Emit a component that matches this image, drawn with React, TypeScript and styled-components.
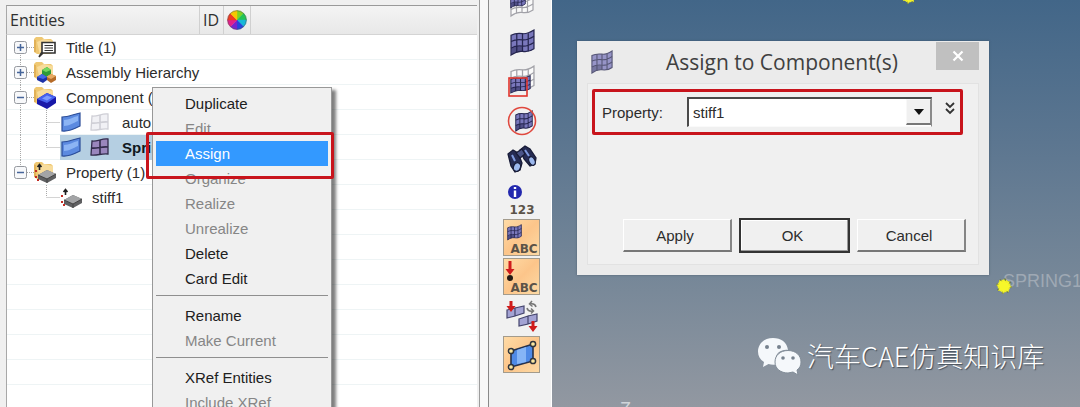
import React from "react";
import styled, { createGlobalStyle, css } from "styled-components";

const uiFont = '"Liberation Sans", Arial, sans-serif';
const titleFont = '"Open Sans", "Noto Sans", sans-serif';
const red = "#c8141c";

const GlobalStyle = createGlobalStyle`
  * { box-sizing: border-box; }
  body { margin: 0; background: #f0f0f0; font-family: ${uiFont}; font-size: 15px; color: #2c2c2c; }
  button, select { font: inherit; color: inherit; }
  svg { display: block; flex: none; }
`;

const Page = styled.div`
  position: relative;
  display: flex;
  height: 100vh;
  overflow: hidden;
`;

/* ---------- entity browser ---------- */

const Browser = styled.section`
  flex: 0 0 477px;
  display: flex;
  flex-direction: column;
  padding: 5px 0 0 6px;
`;

const HeaderBar = styled.div`
  flex: none;
  display: flex;
  align-items: stretch;
  height: 30px;
  border-top: 1px solid #9a9a9a;
  border-left: 1px solid #a8a8a8;
  border-bottom: 1px solid #d4d4d4;
  background: linear-gradient(#f4f4f4, #e8e8e8);
  font-family: ${titleFont};
  font-size: 16px;
  color: #303030;
`;

const HeaderCell = styled.div<{ $width: number }>`
  flex: 0 0 ${(p) => p.$width}px;
  display: flex;
  align-items: center;
  padding-left: 3px;
  border-right: 1px solid #d0d0d0;
`;

const Tree = styled.ul`
  flex: 1;
  margin: 0;
  padding: 0;
  list-style: none;
  border-left: 1px solid #a8a8a8;
  background: repeating-linear-gradient(#fff 0 24px, #eef4f5 24px 25px);
`;

const TreeRow = styled.li`
  display: flex;
  align-items: center;
  height: 25px;
`;

const Gutter = styled.div<{ $deep?: boolean }>`
  flex: 0 0 ${(p) => (p.$deep ? 53 : 27)}px;
  height: 25px;
`;

const Label = styled.span<{ $gap?: number }>`
  margin-left: ${(p) => p.$gap ?? 8}px;
  white-space: nowrap;
`;

const Selection = styled.div<{ $on?: boolean }>`
  display: flex;
  align-items: center;
  gap: 8px;
  height: 25px;
  padding-left: 1px;
  width: 130px;
  ${(p) =>
    p.$on &&
    css`
      background: #b5cfe2;
      font-weight: bold;
      color: #101820;
    `}
`;

const Splitter = styled.div`
  flex: 0 0 13px;
  border-left: 2px solid #f0f0f0;
  background: linear-gradient(90deg, #9c9c9c 0 1px, #f8f8f8 1px 9px, #8a8a8a 9px 10px, #f0f0f0 10px);
`;

/* ---------- tool strip ---------- */

const ToolStrip = styled.nav`
  flex: 0 0 62px;
  display: flex;
  flex-direction: column;
  gap: 2px;
  padding-left: 13px;
  border-right: 1px solid #fff;
  background: #f1f1f1;
  overflow: hidden;
  & > :first-child { margin-top: -15px; }
`;

const Tool = styled.button<{ $active?: boolean }>`
  flex: none;
  width: 37px;
  height: 37px;
  padding: 0;
  border: 1px solid ${(p) => (p.$active ? "#a39b8c" : "transparent")};
  background: ${(p) => (p.$active ? "linear-gradient(135deg, #ffdba6, #fcc58a 50%, #fdd9a4)" : "none")};
`;

/* ---------- context menu ---------- */

const Menu = styled.div`
  position: absolute;
  left: 152px;
  top: 87px;
  width: 180px;
  display: flex;
  flex-direction: column;
  padding: 3px;
  border: 1px solid #989898;
  background: #f0f0f0;
  box-shadow: 4px 3px 3px rgba(0, 0, 0, 0.5);
`;

const MenuItem = styled.button<{ $hot?: boolean }>`
  height: 25px;
  flex: none;
  padding: 0 0 0 29px;
  border: 0;
  text-align: left;
  background: ${(p) => (p.$hot ? "#3399ff" : "none")};
  color: ${(p) => (p.$hot ? "#fff" : "#202020")};
  &:disabled { color: #868686; }
`;

const MenuRule = styled.hr`
  flex: none;
  width: 100%;
  height: 1px;
  margin: 4px 0 7px;
  border: 0;
  background: #8f8f8f;
`;

const MenuMarker = styled.div`
  position: absolute;
  left: 146px;
  top: 132px;
  width: 188px;
  height: 47px;
  border: 3px solid ${red};
  border-radius: 2px;
  pointer-events: none;
`;

/* ---------- model viewport and dialog ---------- */

const Viewport = styled.main`
  position: relative;
  flex: 1;
  overflow: hidden;
  background: linear-gradient(#426688, #5c7690 35%, #768798 68%, #9298a1);
`;

const Pin = styled.div<{ $x: number; $y: number }>`
  position: absolute;
  left: ${(p) => p.$x}px;
  top: ${(p) => p.$y}px;
`;

const NodeLabel = styled.span<{ $bright?: boolean }>`
  font-size: 18px;
  line-height: 20px;
  color: ${(p) => (p.$bright ? "#d0d4d9" : "#9fa9b4")};
`;

const Watermark = styled.div`
  position: absolute;
  left: 206px;
  top: 336px;
  display: flex;
  align-items: center;
  gap: 5px;
  font-family: "Noto Sans CJK SC", sans-serif;
  font-size: 27px;
  line-height: 40px;
  font-weight: 300;
  color: #fff;
  text-shadow: 1px 1px 1px rgba(40, 50, 60, 0.7);
  white-space: nowrap;
`;

const Dialog = styled.section`
  position: absolute;
  left: 25px;
  top: 41px;
  width: 412px;
  padding: 0 10px 10px;
  background: #ebebeb;
  box-shadow: 0 0 2px rgba(40, 55, 75, 0.5);
`;

const TitleBar = styled.header`
  display: flex;
  align-items: flex-start;
  height: 42px;
  padding: 1px 0 0 4px;
`;

const TitleIcon = styled.div`
  padding-top: 8px;
`;

const DialogTitle = styled.h1`
  flex: 1;
  margin: 0;
  padding-left: 15px;
  font-family: ${titleFont};
  font-size: 21px;
  line-height: 40px;
  font-weight: 400;
  text-align: center;
  color: #404040;
`;

const CloseButton = styled.button`
  display: flex;
  align-items: center;
  justify-content: center;
  width: 43px;
  height: 28px;
  padding: 0;
  border: 0;
  background: #c0c0c0;
`;

const DialogBody = styled.div`
  display: flex;
  flex-direction: column;
  justify-content: space-between;
  height: 182px;
  padding: 5px 12px 11px 4px;
  border: 1px solid #e2e2e2;
  background: #f0f0f0;
`;

const PropertyRow = styled.div`
  display: flex;
  align-items: center;
  gap: 12px;
  height: 46px;
  width: 371px;
  padding: 0 4px 0 7px;
  border: 3px solid ${red};
  border-radius: 2px;
`;

const PropertyLabel = styled.label`
  flex: 0 0 73px;
`;

const Combo = styled.div`
  position: relative;
  flex: 1;
  height: 30px;
`;

const ComboSelect = styled.select`
  appearance: none;
  width: 100%;
  height: 100%;
  padding: 0 28px 0 4px;
  border: solid;
  border-width: 2px 1px 1px 2px;
  border-color: #4a4a4a #8a8a8a #fafafa #4a4a4a;
  border-radius: 0;
  background: #fff;
`;

const ComboArrow = styled.span`
  position: absolute;
  right: 1px;
  top: 2px;
  display: flex;
  align-items: center;
  justify-content: center;
  width: 25px;
  height: 26px;
  border: solid;
  border-width: 1px 1px 2px 1px;
  border-color: #f8f8f8 #8a8a8a #777 #f8f8f8;
  background: #f0f0f0;
  pointer-events: none;
`;

const MoreButton = styled.button`
  flex: none;
  width: 12px;
  height: 24px;
  margin: 0 0 8px;
  padding: 0;
  border: 0;
  background: none;
`;

const Actions = styled.div`
  display: flex;
  align-items: center;
  justify-content: flex-end;
  gap: 7px;
`;

const ActionButton = styled.button<{ $primary?: boolean }>`
  width: ${(p) => (p.$primary ? 111 : 109)}px;
  height: ${(p) => (p.$primary ? 35 : 33)}px;
  padding: 0 4px 0 0;
  border: solid;
  ${(p) =>
    p.$primary
      ? css`
          border-width: 2px;
          border-color: #333;
          box-shadow: inset -1px -1px #999, inset 1px 1px #fff;
        `
      : css`
          border-width: 1px 2px 2px 1px;
          border-color: #fff #858585 #777 #fff;
        `}
  background: #f0f0f0;
`;

/* ---------- drawings ---------- */

const dots = { stroke: "#a8a8a8", strokeDasharray: "1 1", fill: "none" };

function Expander({ open, first, last }: { open?: boolean; first?: boolean; last?: boolean }) {
  return (
    <Gutter>
      <svg width="27" height="25">
        <path d={`M13.5 ${first ? 12 : 0}V${last ? 12 : 25}M20 12.5H27`} {...dots} />
        <rect x="7.500" y="6.500" width="12" height="12" rx="2" fill="#f7f8fa" stroke="#96999f" />
        <path d={open ? "M10 12.500H17" : "M10 12.500H17M13.500 9V16"} stroke="#46659a" strokeWidth="1.500" />
      </svg>
    </Gutter>
  );
}

function Branch({ trunk, last }: { trunk?: boolean; last?: boolean }) {
  return (
    <Gutter $deep>
      <svg width="53" height="25">
        <path d={`${trunk ? "M13.5 0V25" : ""}M39.5 0V${last ? 12 : 25}M39.5 12.5H53`} {...dots} />
      </svg>
    </Gutter>
  );
}

function FolderIcon({ kind }: { kind: "title" | "assembly" | "component" | "property" }) {
  return (
    <svg width="24" height="25" viewBox="0 0 24 25">
      <path d="M0 4L2 2H8L10 4H17L19 6V17L17 19H3L0 17Z" fill="#efc873" />
      <path d="M3 7L10 4L19 6V16L6 20Z" fill="#f8dc9c" />
      <path d="M1 5V17" stroke="#d39a3c" />
      {kind === "title" && (
        <g stroke="#333" strokeWidth="1.600" fill="#fff">
          <path d="M8 7.500H21V18H9L5 22L8 17Z" />
          <path d="M10.500 10.500H19M10.500 13H19M10.500 15.500H19" strokeWidth="1.200" />
        </g>
      )}
      {kind === "assembly" && (
        <g>
          <path d="M8 10L13 7L17 10V14L12 17L8 14Z" fill="#2f9a38" />
          <path d="M8 10L13 7L17 10L12 12Z" fill="#74d65e" />
          <path d="M3 17L8 14L13 17V20L9 23L3 20Z" fill="#1d32a8" />
          <path d="M3 17L8 14L13 17L9 19Z" fill="#4568e8" />
          <path d="M13 17L17 14L22 16V20L17 23L13 20Z" fill="#b56b28" />
          <path d="M13 17L17 14L22 16L17 19Z" fill="#e8aa62" />
        </g>
      )}
      {kind === "component" && (
        <g>
          <path d="M3 14L13 8L22 12V18L13 24L3 19Z" fill="#1717a8" />
          <path d="M3 14L13 8L22 12L13 18Z" fill="#4662ee" />
          <path d="M8 13.500L13 10.500L18 12.500L13 15.500Z" fill="#7c9bff" />
        </g>
      )}
      {kind === "property" && <SolidBlock />}
    </svg>
  );
}

function SolidBlock() {
  return (
    <g>
      <path d="M4 15L13 10L22 14V18L13 23L4 19Z" fill="#5f6062" />
      <path d="M4 15L13 10L22 14L13 19Z" fill="#a3a4a6" />
      <path d="M13 19V23M4 15L13 19L22 14" stroke="#444" fill="none" />
      <path d="M5.500 10V5M3.500 7L5.500 4.500L7.500 7" stroke="#222" strokeWidth="1.600" fill="none" />
      <path d="M1 11H3M1 17H3M3 20H5" stroke="#c22a22" strokeWidth="2" />
    </g>
  );
}

function SurfaceIcon() {
  return (
    <svg width="21" height="21" viewBox="0 0 21 21">
      <path d="M1 5C8 5 13 2 19 1V14C15 16 8 20 1 19Z" fill="#5c8ae0" stroke="#2a4c98" strokeWidth="1.200" />
      <path d="M3 8C8 8 12 5 17 4V9C12 11 8 14 3 14Z" fill="#8cb4f4" />
    </svg>
  );
}

function MeshIcon({ faded }: { faded?: boolean }) {
  return (
    <svg width="20" height="21" viewBox="0 0 20 21">
      <path
        d="M2 4C7 5 12 1 18 2V17C12 16 7 19 1 18Z"
        fill={faded ? "#f1f1f5" : "#9a86bd"}
        stroke={faded ? "#cfcfd6" : "#332c4c"}
        strokeWidth="1.300"
      />
      <path d="M10 3V17M1.500 11C7 12 12 9 18 10" stroke={faded ? "#cfcfd6" : "#332c4c"} strokeWidth="1.600" fill="none" />
    </svg>
  );
}

function ColorWheel() {
  const hues = ["#7ed321", "#22c455", "#17b7d8", "#2445dc", "#7a22cc", "#e21f8b", "#f03a20", "#f5c800"];
  return (
    <svg width="20" height="20" viewBox="-10 -10 20 20">
      {hues.map((c, i) => (
        <path key={c} d="M0 0L0 -9.500A9.500 9.500 0 0 1 6.720 -6.720Z" fill={c} stroke={c} strokeWidth=".4" transform={`rotate(${i * 45})`} />
      ))}
      <circle r="9.300" fill="none" stroke="#555" strokeOpacity=".5" />
    </svg>
  );
}

function Mesh({ x, y, w = 24, h = 25, hollow = false }: { x: number; y: number; w?: number; h?: number; hollow?: boolean }) {
  const line = hollow ? "#a2a2a8" : "#262650";
  return (
    <g transform={`translate(${x} ${y}) scale(${w / 24} ${h / 25})`} fill="none" stroke={line} strokeWidth="1.200">
      <path d="M1 6C5 4 8 4 12 4.500S19 3.500 23 1V19C19 22 16 22 12 21.500S5 22 1 25Z" fill={hollow ? "#fafafa" : "#7a78bc"} />
      <path d="M1 12C5 10 8 10 12 10.500S19 9.500 23 7M1 18.500C5 16 8 16 12 16.500S19 15.500 23 13M6.500 4.500V22.500M12 4.500V21.500M17.500 4V21.500" />
      {!hollow && <path d="M1.500 19C5 16.500 8 16.500 12 17V21.500C8 21 5 22 1.500 24.500Z" fill="#1c1c48" fillOpacity=".45" stroke="none" />}
    </g>
  );
}

function DownArrow({ x, y, h = 16 }: { x: number; y: number; h?: number }) {
  return <path d={`M${x - 1.5} ${y}h3v${h - 6}h3l-4.500 6l-4.500 -6h3Z`} fill="#cf1c1c" />;
}

const tagText = { fontFamily: "DejaVu Sans, sans-serif", fontWeight: 700, fontSize: 12, fill: "#5b5348", textAnchor: "middle" as const };

const tools: { name: string; active?: boolean; art: React.ReactNode }[] = [
  { name: "Mask", art: <><Mesh x={7} y={6} hollow /><Mesh x={7} y={6} w={16} h={17} /></> },
  { name: "Shade elements", art: <Mesh x={7} y={5} w={25} h={26} /> },
  {
    name: "Select by window",
    art: <><Mesh x={7} y={2} w={25} h={27} hollow /><Mesh x={7} y={12} w={21} h={18} /><rect x="6" y="15" width="18" height="18" fill="none" stroke="#e0342c" strokeWidth="1.600" /></>,
  },
  {
    name: "Select by circle",
    art: <><Mesh x={12} y={8} w={18} h={21} /><circle cx="19" cy="19" r="13.500" fill="none" stroke="#e0483e" strokeWidth="1.600" /></>,
  },
  {
    name: "Find",
    art: (
      <g stroke="#181c38" strokeWidth="1.300">
        <path d="M5 13L10 9L15 12L19 22L17 29L12 31L8 25Z" fill="#262c54" />
        <path d="M17 9L22 5L27 8L33 17L32 23L27 25L21 18Z" fill="#262c54" />
        <path d="M13 12L19 8L22 13L17 17Z" fill="#4a5488" />
        <ellipse cx="14" cy="26" rx="3.500" ry="4.500" fill="#9db9ee" transform="rotate(20 14 26)" />
        <ellipse cx="29" cy="20" rx="3" ry="4.500" fill="#9db9ee" transform="rotate(-25 29 20)" />
        <path d="M9 14L12 20M22 9L26 15" stroke="#7f9be0" strokeWidth="2" />
      </g>
    ),
  },
  {
    name: "Numbers",
    art: (
      <>
        <circle cx="12" cy="12" r="7" fill="#2328ae" />
        <path d="M12 7V9M12 10.500V17" stroke="#fff" strokeWidth="2.400" />
        <text x="19" y="34" {...tagText}>123</text>
      </>
    ),
  },
  { name: "Element labels", active: true, art: <><Mesh x={4} y={5} w={15} h={16} /><text x="21" y="34" {...tagText}>ABC</text></> },
  {
    name: "Load labels",
    active: true,
    art: <><DownArrow x={7} y={3} h={14} /><circle cx="7" cy="20" r="3" fill="#241a14" /><text x="21" y="34" {...tagText}>ABC</text></>,
  },
  {
    name: "Switch loads",
    art: (
      <>
        <g fill="#a3a3d4" stroke="#45456e" strokeWidth="1.200">
          <path d="M4 13L12 11V19L4 21ZM12 11L21 9V16L12 19Z" />
          <path d="M16 22L25 19V27L16 29ZM25 19L34 17V24L25 27Z" />
        </g>
        <DownArrow x={8} y={4} h={11} />
        <DownArrow x={30} y={24} h={11} />
        <path d="M33 10Q32 6 27 7M29 4L26.500 7L29.500 9.500M24 11Q25 15 30 14M28 11.500L30.500 14L28 16.500" stroke="#777" strokeWidth="1.500" fill="none" />
      </>
    ),
  },
  {
    name: "Surface points",
    active: true,
    art: (
      <>
        <path d="M8 15L30 8V25L8 31Z" fill="#4f8ae6" stroke="#27324c" strokeWidth="1.600" />
        <path d="M14 14L23 11V26L14 28Z" fill="#86b5f6" />
        {[[8, 15], [30, 8], [30, 25], [8, 31]].map(([x, y]) => (
          <circle key={`${x}-${y}`} cx={x} cy={y} r="2.600" fill="#fbe7a0" stroke="#30343c" strokeWidth="1.500" />
        ))}
      </>
    ),
  },
];

function Spark() {
  return (
    <svg width="18" height="18" viewBox="-9 -9 18 18">
      <circle r="6.500" fill="#eded28" stroke="#6f7c48" strokeWidth="2.500" strokeDasharray="2 3" />
      <path d="M0 -7L2 -3L6 -5L4 -1L8 1L4 2L5 6L1 4L-1 8L-2 4L-6 5L-4 1L-8 -1L-4 -2L-5 -6L-1 -4Z" fill="#f7f72a" />
    </svg>
  );
}

function ChatBubbles() {
  return (
    <svg width="44" height="40" viewBox="0 0 44 40">
      <path d="M15 2C6 2 0 8 0 15.500C0 20 2 23.500 6 26L5 31L10.500 28Q14 29 18 28.500C15 18 23 13 30 14C29 6 23 2 15 2Z" fill="#f5f8fb" />
      <path d="M30 14.500C22 14.500 17 19.500 17 26C17 33 23 37 30 37L35 36L40 39L39 34C42 32 43 29 43 26C43 19.500 38 14.500 30 14.500Z" fill="#f5f8fb" stroke="#828d98" strokeWidth="1" />
      <g fill="#77828e">
        <circle cx="9" cy="11" r="2" /><circle cx="21" cy="11" r="2" />
        <circle cx="25" cy="22" r="1.800" /><circle cx="35" cy="22" r="1.800" />
      </g>
    </svg>
  );
}

const menuGroups: { text: string; off?: boolean; hot?: boolean }[][] = [
  [
    { text: "Duplicate" }, { text: "Edit", off: true }, { text: "Assign", hot: true }, { text: "Organize", off: true },
    { text: "Realize", off: true }, { text: "Unrealize", off: true }, { text: "Delete" }, { text: "Card Edit" },
  ],
  [{ text: "Rename" }, { text: "Make Current", off: true }],
  [{ text: "XRef Entities" }, { text: "Include XRef", off: true }],
];

export default function App() {
  return (
    <>
      <GlobalStyle />
      <Page>
        <Browser aria-label="Entities">
          <HeaderBar>
            <HeaderCell $width={193}>Entities</HeaderCell>
            <HeaderCell $width={24}>ID</HeaderCell>
            <HeaderCell $width={27}><ColorWheel /></HeaderCell>
          </HeaderBar>
          <Tree>
            <TreeRow><Expander first /><FolderIcon kind="title" /><Label>Title (1)</Label></TreeRow>
            <TreeRow><Expander /><FolderIcon kind="assembly" /><Label>Assembly Hierarchy</Label></TreeRow>
            <TreeRow><Expander open /><FolderIcon kind="component" /><Label>Component (2)</Label></TreeRow>
            <TreeRow>
              <Branch trunk />
              <Selection><SurfaceIcon /><MeshIcon faded /><Label $gap={4}>auto1</Label></Selection>
            </TreeRow>
            <TreeRow>
              <Branch trunk last />
              <Selection $on><SurfaceIcon /><MeshIcon /><Label $gap={4}>Spring</Label></Selection>
            </TreeRow>
            <TreeRow><Expander open last /><FolderIcon kind="property" /><Label>Property (1)</Label></TreeRow>
            <TreeRow>
              <Branch last />
              <svg width="24" height="25" viewBox="0 0 24 25"><SolidBlock /></svg>
              <Label>stiff1</Label>
            </TreeRow>
          </Tree>
        </Browser>
        <Splitter />
        <ToolStrip aria-label="Display tools">
          {tools.map((t) => (
            <Tool key={t.name} $active={t.active} aria-label={t.name}>
              <svg width="35" height="35" viewBox="1 1 35 35">{t.art}</svg>
            </Tool>
          ))}
        </ToolStrip>
        <Viewport>
          <Pin $x={348} $y={-13}><Spark /></Pin>
          <Pin $x={451} $y={271}><NodeLabel>SPRING1</NodeLabel></Pin>
          <Pin $x={443} $y={277}><Spark /></Pin>
          <Pin $x={68} $y={399}><NodeLabel $bright>Z</NodeLabel></Pin>
          <Dialog role="dialog" aria-labelledby="assign-title">
            <TitleBar>
              <TitleIcon><svg width="22" height="24" viewBox="0 0 22 24" opacity=".75"><Mesh x={0} y={0} w={22} h={23} /></svg></TitleIcon>
              <DialogTitle id="assign-title">Assign to Component(s)</DialogTitle>
              <CloseButton aria-label="Close">
                <svg width="12" height="12"><path d="M1.500 1.500L10.500 10.500M10.500 1.500L1.500 10.500" stroke="#fff" strokeWidth="2.200" /></svg>
              </CloseButton>
            </TitleBar>
            <DialogBody>
              <PropertyRow>
                <PropertyLabel htmlFor="property">Property:</PropertyLabel>
                <Combo>
                  <ComboSelect id="property" defaultValue="stiff1"><option>stiff1</option></ComboSelect>
                  <ComboArrow><svg width="10" height="6"><path d="M0 0H10L5 6Z" fill="#111" /></svg></ComboArrow>
                </Combo>
                <MoreButton aria-label="More">
                  <svg width="12" height="24" viewBox="0 0 12 24"><path d="M2 7L6 11L10 7M2 13L6 17L10 13" fill="none" stroke="#333" strokeWidth="1.800" /></svg>
                </MoreButton>
              </PropertyRow>
              <Actions>
                <ActionButton>Apply</ActionButton>
                <ActionButton $primary>OK</ActionButton>
                <ActionButton>Cancel</ActionButton>
              </Actions>
            </DialogBody>
          </Dialog>
          <Watermark><ChatBubbles />汽车CAE仿真知识库</Watermark>
        </Viewport>
        <Menu role="menu">
          {menuGroups.map((group, i) => (
            <React.Fragment key={i}>
              {i > 0 && <MenuRule />}
              {group.map((m) => (
                <MenuItem key={m.text} role="menuitem" $hot={m.hot} disabled={m.off}>{m.text}</MenuItem>
              ))}
            </React.Fragment>
          ))}
        </Menu>
        <MenuMarker />
      </Page>
    </>
  );
}
